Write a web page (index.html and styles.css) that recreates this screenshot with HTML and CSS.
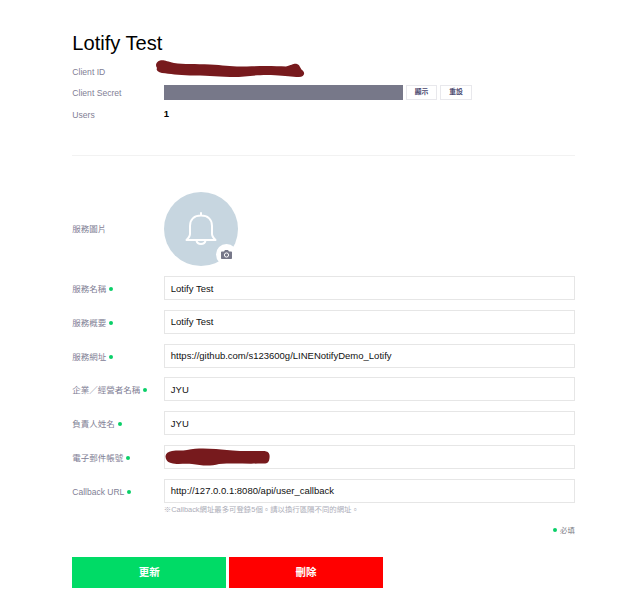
FILE: index.html
```html
<!DOCTYPE html>
<html lang="zh-Hant">
<head>
<meta charset="utf-8">
<title>Lotify Test</title>
<link rel="stylesheet" href="styles.css">
</head>
<body>
<main class="page">
  <h1 class="title">Lotify Test</h1>
  <dl class="summary">
    <dt>Client ID</dt>
    <dd><svg class="mark-id" width="150" height="20" viewBox="0 0 150 20"><path d="M4 .5C8-.5 11 1.500 18 3C28 4.500 39 3.700 54 4.500S76 7 91 6.400S120 6 130 6.500C136 5 138 3 141 4C144 5 144 8 146 10C150 13 148 17 143 17C136 17 129 15.500 119 15.200C100 14 89 17.500 74 17S49 15.500 34 15.500C22 15 14 14 6 13C1 12 0 10 1 8C-1 5 0 2 4 .5Z"/></svg></dd>
    <dt>Client Secret</dt>
    <dd class="secret"><span class="mask"></span><button class="small">顯示</button><button class="small">重設</button></dd>
    <dt>Users</dt>
    <dd class="users">1</dd>
  </dl>
  <hr class="rule">
  <form class="form">
    <div class="row picture-row">
      <span class="label">服務圖片</span>
      <div class="avatar">
        <svg class="bell" width="34" height="36" viewBox="0 0 34 36"><path d="M17 2V4M6 23V15C6 8 10.500 4.500 17 4.500S28 8 28 15V23Q28 25.500 31.500 29H2.500Q6 25.500 6 23ZM12.500 29.500C13 32 14.500 33 17 33S21 32 21.500 29.500"/></svg>
        <span class="camera"><svg width="11" height="9" viewBox="0 0 11 9"><path class="body" d="M.8 1.500H3L4 0H7L8 1.500H10.200Q11 1.500 11 2.300V8.200Q11 9 10.200 9H.8Q0 9 0 8.200V2.300Q0 1.500.8 1.500Z"/><circle class="lens" cx="5.500" cy="5" r="2.100"/></svg></span>
      </div>
    </div>
    <div class="row"><span class="label required">服務名稱</span><div class="field">Lotify Test</div></div>
    <div class="row"><span class="label required">服務概要</span><div class="field">Lotify Test</div></div>
    <div class="row"><span class="label required">服務網址</span><div class="field">https://github.com/s123600g/LINENotifyDemo_Lotify</div></div>
    <div class="row"><span class="label required">企業／經營者名稱</span><div class="field">JYU</div></div>
    <div class="row"><span class="label required">負責人姓名</span><div class="field">JYU</div></div>
    <div class="row"><span class="label required">電子郵件帳號</span><div class="field"><svg class="mark-mail" width="106" height="19" viewBox="0 0 106 19"><path d="M7 3C12 2 17 3 22 2C32 0 41 .5 51 1C58 2 65 2 75 3H98C104 3 105 6 104.500 10C104 14 103 16 97 15.500C80 16 68 15 54 16C45 18.500 36 17.500 27 16C19 15 13 17 6 15C2 14 .5 11 .5 8Q1 4 7 3Z"/></svg></div></div>
    <div class="row"><span class="label required">Callback URL</span><div class="field">http://127.0.0.1:8080/api/user_callback</div></div>
    <p class="hint">※Callback網址最多可登錄5個。請以換行區隔不同的網址。</p>
    <p class="legend">必填</p>
    <div class="actions"><button class="update" type="button">更新</button><button class="delete" type="button">刪除</button></div>
  </form>
</main>
</body>
</html>
```
FILE: styles.css
```css
* { box-sizing: border-box; }
body {
  margin: 0;
  background: #fff;
  color: #111;
  font-family: "Liberation Sans", "Noto Sans CJK TC", sans-serif;
}
.page { width: 502.6px; margin-left: 72.3px; padding-top: 30px; }
.title { margin: 0; font-size: 20.1px; line-height: 26px; font-weight: 400; color: #000; }
.summary {
  display: grid;
  grid-template-columns: 91.5px 1fr;
  grid-template-rows: 21.5px 21.5px 21.5px;
  align-items: center;
  margin: 5px 0 0;
  font-size: 8.6px;
  color: #7f8095;
}
.summary dd { margin: 0; }
.summary dt { padding-top: .4px; }
.mark-id { display: block; margin: -4px 0 0 -8px; overflow: visible; fill: #771a1d; }
.summary .secret { display: flex; gap: 3px; height: 15px; margin-top: -2.5px; }
.mask { width: 239px; background: #777889; }
.small {
  width: 31.5px;
  padding: 0;
  border: 1px solid #e8e8ec;
  background: #fff;
  color: #48466d;
  font: 700 6.8px/12px "Liberation Sans", "Noto Sans CJK TC", sans-serif;
}
.summary .users { color: #000; font-size: 9.5px; font-weight: 700; padding-bottom: 3px; }
.rule { margin: 29px 0 36px; border: 0; border-top: 1px solid #f2f2f2; }
.row { display: grid; grid-template-columns: 91.5px 1fr; align-items: center; height: 24px; margin-bottom: 9.75px; }
.picture-row { height: 74px; margin-bottom: 10.5px; }
.label { display: flex; align-items: center; gap: 3px; color: #7f8095; font-size: 8.5px; line-height: 12px; padding-top: 2px; white-space: nowrap; }
.picture-row .label { padding-top: 0; }
.required::after, .legend::before { content: ""; width: 4px; height: 4px; border-radius: 50%; background: #0acf68; }
.avatar { position: relative; display: grid; place-items: center; width: 74px; height: 74px; border-radius: 50%; background: #c7d6e0; }
.bell { fill: none; stroke: #fff; stroke-width: 2; stroke-linejoin: round; stroke-linecap: round; }
.camera { position: absolute; right: 1px; bottom: 1px; display: grid; place-items: center; width: 21px; height: 21px; border-radius: 50%; background: #fff; }
.body { fill: #777889; }
.lens { fill: #777889; stroke: #fff; stroke-width: 1; }
.field { display: flex; align-items: center; height: 24px; padding-left: 6px; border: 1px solid #e6e6e6; color: #111; font-size: 9.5px; }
.mark-mail { margin: 2px 0 0 -6px; fill: #771a1d; }
.hint { margin: -7px 0 0 91.5px; font-size: 7.4px; line-height: 10px; color: #acadb8; }
.legend { display: flex; justify-content: flex-end; align-items: center; gap: 3px; margin: 9.5px 0 0; font-size: 7.4px; line-height: 11px; color: #77787f; }
.actions { display: flex; gap: 3px; margin-top: 21px; }
.actions button { width: 153.8px; height: 31.5px; padding: 0 0 2px; border: 0; color: #fff; font: 700 10.5px "Liberation Sans", "Noto Sans CJK TC", sans-serif; }
.actions .update { background: #00db66; }
.actions .delete { background: #f00; }
```
